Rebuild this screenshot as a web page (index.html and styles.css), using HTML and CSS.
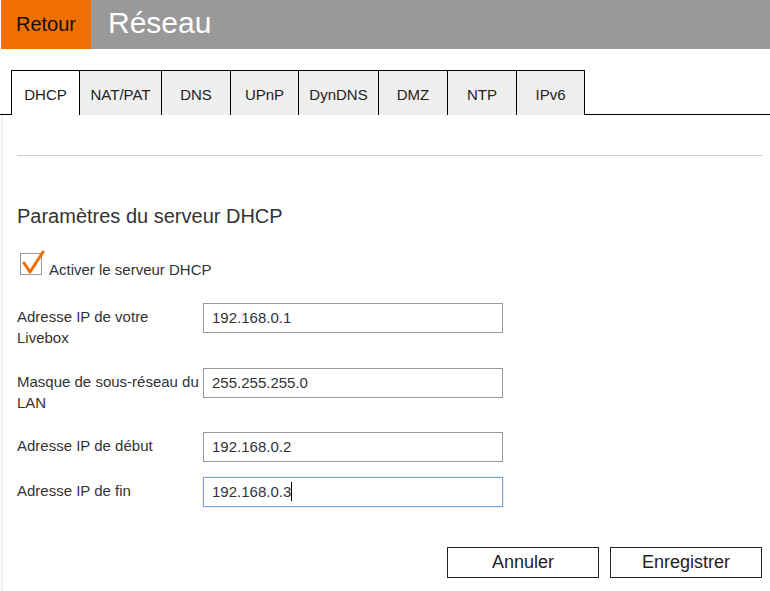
FILE: index.html
```html
<!DOCTYPE html>
<html lang="fr">
<head>
<meta charset="utf-8">
<title>Réseau</title>
<link rel="stylesheet" href="styles.css">
</head>
<body>
<header class="topbar">
  <div class="back">Retour</div>
  <div class="title">Réseau</div>
</header>
<nav class="tabs">
  <div class="tab-edge"></div>
  <div class="tab active w69">DHCP</div>
  <div class="tab w82">NAT/PAT</div>
  <div class="tab w69">DNS</div>
  <div class="tab w68">UPnP</div>
  <div class="tab w80">DynDNS</div>
  <div class="tab w69">DMZ</div>
  <div class="tab w69">NTP</div>
  <div class="tab w68">IPv6</div>
  <div class="tab-fill"></div>
</nav>
<main class="panel">
  <hr class="sep">
  <h2 class="heading">Paramètres du serveur DHCP</h2>
  <div class="check-row">
    <span class="checkbox">
      <svg class="checkmark" width="26" height="28" viewBox="0 0 26 28"><path d="M3 13 L9 22 L22 2" fill="none" stroke="#f16e00" stroke-width="3" stroke-linecap="round" stroke-linejoin="round"/></svg>
    </span>
    <span class="check-label">Activer le serveur DHCP</span>
  </div>
  <div class="form">
    <div class="row">
      <label class="lbl">Adresse IP de votre Livebox</label>
      <div class="field">192.168.0.1</div>
    </div>
    <div class="row tight">
      <label class="lbl">Masque de sous-réseau du LAN</label>
      <div class="field">255.255.255.0</div>
    </div>
    <div class="row">
      <label class="lbl">Adresse IP de début</label>
      <div class="field">192.168.0.2</div>
    </div>
    <div class="row">
      <label class="lbl">Adresse IP de fin</label>
      <div class="field focus">192.168.0.3<span class="caret"></span></div>
    </div>
  </div>
  <div class="actions">
    <button class="btn">Annuler</button>
    <button class="btn">Enregistrer</button>
  </div>
</main>
</body>
</html>
```
FILE: styles.css
```css
* { box-sizing: border-box; }
html, body { margin: 0; padding: 0; background: #fff; }
body {
  font-family: "Liberation Sans", Arial, sans-serif;
  color: #333;
  width: 770px;
  height: 591px;
  overflow: hidden;
}
.topbar {
  display: flex;
  height: 49px;
}
.back {
  width: 90px;
  background: #f16e00;
  color: #111;
  font-size: 20px;
  line-height: 49px;
  padding-left: 15px;
  margin-left: 1px;
}
.title {
  flex: 1;
  background: #999;
  color: #fff;
  font-size: 30px;
  line-height: 46px;
  padding-left: 17px;
}
.tabs {
  display: flex;
  margin-top: 21px;
  height: 45px;
}
.tab-edge {
  width: 11px;
  border-bottom: 1px solid #000;
}
.tab-fill {
  flex: 1;
  border-bottom: 1px solid #000;
}
.tab {
  background: #efefef;
  border-top: 1px solid #000;
  border-right: 1px solid #000;
  font-size: 15px;
  color: #222;
  display: flex;
  align-items: center;
  justify-content: center;
  padding-top: 3px;
}
.tab.active {
  background: #fff;
  border-left: 1px solid #000;
}
.w69 { width: 69px; }
.w82 { width: 82px; }
.w68 { width: 68px; }
.w80 { width: 80px; }
.panel {
  border-left: 2px solid #f0f0f0;
  margin-left: 1px;
  padding: 40px 8px 0 14px;
  height: 477px;
}
.sep {
  margin: 0;
  border: 0;
  border-top: 1px solid #ccc;
  height: 0;
}
.heading {
  font-size: 20px;
  font-weight: normal;
  color: #333;
  margin: 49px 0 0 0;
  line-height: 23px;
}
.check-row {
  display: flex;
  align-items: flex-start;
  margin-top: 25px;
  height: 22px;
}
.checkbox {
  position: relative;
  width: 22px;
  height: 22px;
  border: 1px solid #999;
  margin-left: 3px;
  background: #fff;
  flex: none;
}
.checkmark {
  position: absolute;
  left: 0px;
  top: -4px;
}
.check-label {
  font-size: 15px;
  margin-left: 7px;
  padding-top: 8px;
  color: #333;
}
.form {
  margin-top: 28px;
}
.row {
  display: flex;
  align-items: flex-start;
  margin-bottom: 15px;
}
.row.tight {
  margin-bottom: 14px;
}
.lbl {
  width: 186px;
  font-size: 15px;
  line-height: 21px;
  padding: 3px 0 5px;
  color: #333;
}
.field {
  width: 300px;
  height: 30px;
  border: 1px solid #999;
  font-size: 15px;
  color: #333;
  line-height: 28px;
  padding-left: 8px;
  background: #fff;
}
.field.focus {
  border-color: #7ba3e0;
  box-shadow: 0 0 1px #7ba3e0;
}
.caret {
  display: inline-block;
  width: 1px;
  height: 19px;
  background: #000;
  vertical-align: -4px;
}
.actions {
  display: flex;
  justify-content: flex-end;
  gap: 11px;
  margin-top: 40px;
}
.btn {
  width: 152px;
  height: 31px;
  background: #fff;
  border: 1px solid #222;
  font-family: "Liberation Sans", Arial, sans-serif;
  font-size: 18px;
  color: #222;
  padding: 0;
}
```
